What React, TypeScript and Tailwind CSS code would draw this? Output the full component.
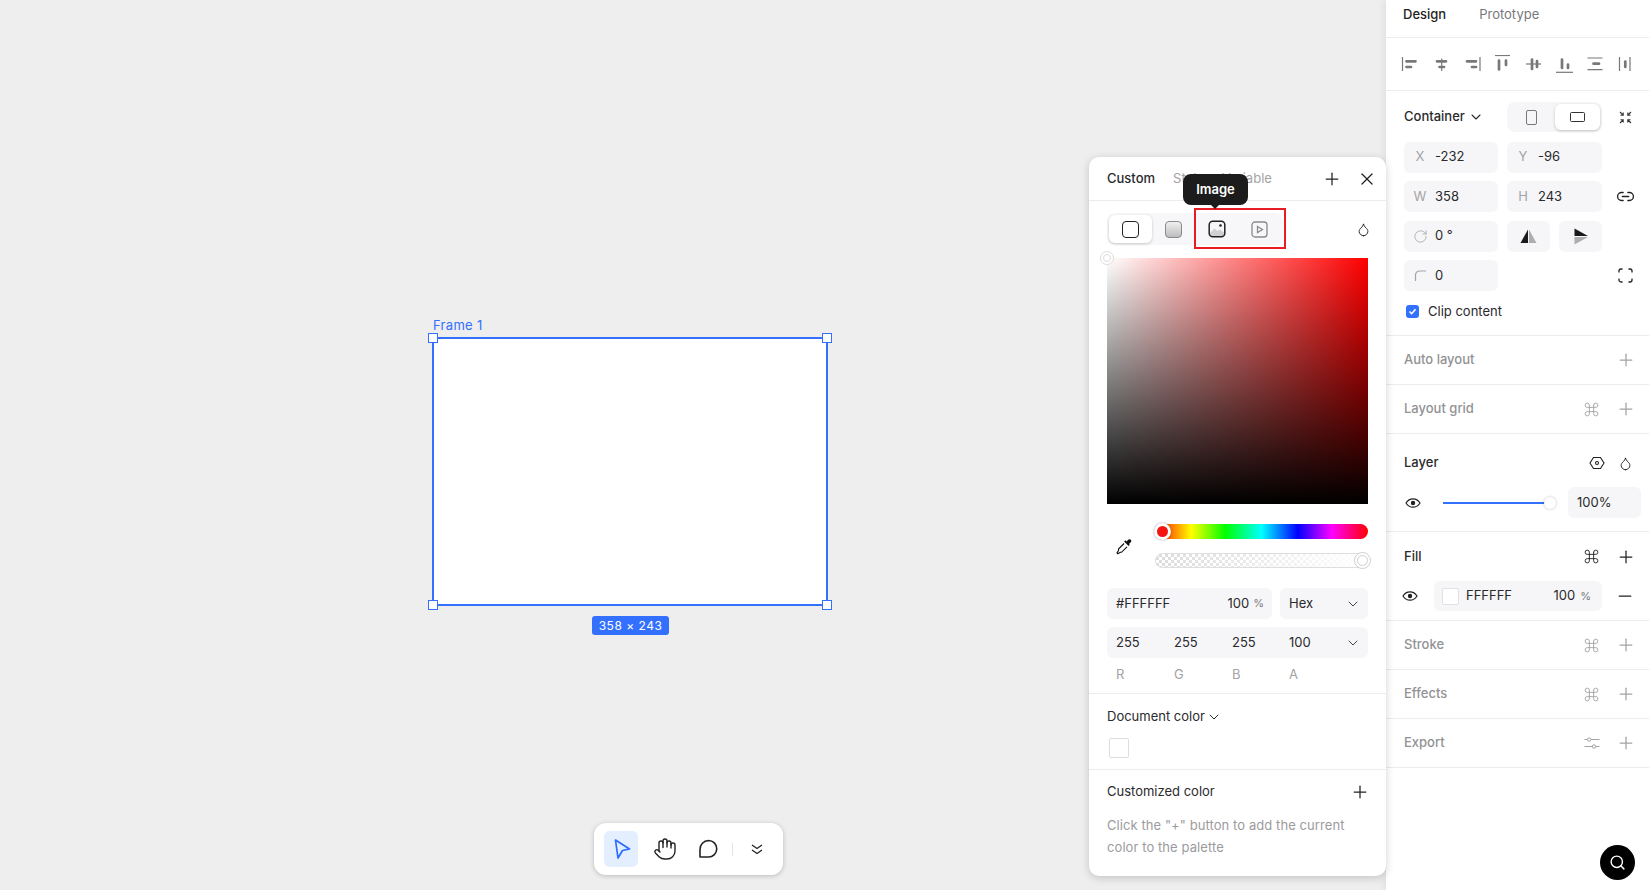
import { ChevronDown, Command, Droplet, Hand, Link2, Minus, Plus, RotateCw, Search, X } from 'lucide-react'
import type { ReactNode } from 'react'

function AlignIcon({ line, bars }: { line: string; bars: string }) {
  return (
    <svg width="20" height="18" viewBox="0 0 20 18" fill="none" className="shrink-0 text-[#77787b]">
      <path d={line} stroke="currentColor" strokeWidth="1.200" />
      <path d={bars} stroke="currentColor" strokeWidth="2.700" strokeLinecap="round" />
    </svg>
  )
}

const alignIcons = [
  { line: 'M2.500 2v14', bars: 'M6.500 6.300h9M6.500 12h4.500' },
  { line: 'M10.700 3.500V16', bars: 'M6 6.300h9M8.500 12H13' },
  { line: 'M18 2v14', bars: 'M5 6.300h9M10 12h4' },
  { line: 'M2 0.500h15', bars: 'M6 5.500v9M13 5.500V10' },
  { line: 'M2 9h15', bars: 'M8 4.500V14M13 6v6' },
  { line: 'M1 17.300h17', bars: 'M7 4.500V13M13 9.500V13' },
  { line: 'M1.500 3h15M1.500 14.700h15', bars: 'M7.500 8.700H13' },
  { line: 'M2.500 2v14M13 2v14', bars: 'M8.300 6.500V12' },
]

function Eye() {
  return (
    <svg width="16" height="16" viewBox="0 0 16 16" fill="none" className="text-[#222]">
      <path d="M1 8c1.700-2.800 4-4.200 7-4.200S13.300 5.200 15 8c-1.700 2.800-4 4.200-7 4.200S2.700 10.800 1 8Z" stroke="currentColor" strokeWidth="1.200" />
      <circle cx="8" cy="8" r="2.200" fill="currentColor" />
    </svg>
  )
}

function Field({ label, value }: { label: ReactNode; value: string }) {
  return (
    <div className="flex h-[31px] items-center rounded-md bg-[#f6f6f8]">
      <span className="flex w-[31px] justify-center pl-[1px] text-[13px] text-[#a3a3a5]">{label}</span>
      <span className="text-[13px] text-[#2a2a2c]">{value}</span>
    </div>
  )
}

function EmptySection({ title, extra }: { title: string; extra?: ReactNode }) {
  return (
    <div className="flex h-[49px] items-center justify-between border-b border-[#ececee] pl-[18px] pr-[13px]">
      <span className="text-[13px] font-medium text-[#929294]">{title}</span>
      <div className="flex items-center gap-[16px] text-[#a3a3a5]">
        {extra}
        <Plus size={20} strokeWidth={1.500} />
      </div>
    </div>
  )
}

function Sidebar() {
  return (
    <aside className="relative z-10 flex h-full w-[263px] shrink-0 flex-col bg-white shadow-[-3px_0_6px_rgba(0,0,0,0.05)]">
      <div className="flex h-[38px] items-center gap-[33px] border-b border-[#ececee] pb-[7px] pl-[17px] text-[13px]">
        <span className="font-[450] text-[#1f1f21]">Design</span>
        <span className="text-[#77787b]">Prototype</span>
      </div>

      <div className="flex h-[53px] items-center gap-[11px] border-b border-[#ececee] pl-[14px]">
        {alignIcons.map((icon) => (
          <AlignIcon key={icon.line + icon.bars} line={icon.line} bars={icon.bars} />
        ))}
      </div>

      <div className="h-[245px] border-b border-[#ececee] pl-[18px] pt-[11px]">
        <div className="grid grid-cols-[94px_95px_38px] grid-rows-[31px_31px_31px_31px_31px] gap-x-[9px] gap-y-[8.5px]">
          <div className="flex h-[30px] items-center gap-[3px] text-[13px] font-[450] text-[#2a2a2c]">
            Container
            <ChevronDown size={16} strokeWidth={1.600} />
          </div>
          <div className="flex h-[30px] items-center rounded-lg bg-[#f6f6f8] px-[2px]">
            <div className="flex w-[46px] justify-center">
              <div className="h-[15px] w-[11px] rounded-[2px] border border-[#77787b]" />
            </div>
            <div className="flex h-[26px] w-[46px] items-center justify-center rounded-md bg-white shadow-[0_1px_3px_rgba(0,0,0,0.22)]">
              <div className="h-[10px] w-[15px] rounded-[1.500px] border border-[#333]" />
            </div>
          </div>
          <div className="flex h-[30px] items-center pl-[7px] text-[#333]">
            <svg width="15" height="15" viewBox="0 0 15 15" fill="none" stroke="currentColor" strokeWidth="1.100">
              <path d="M2 2 5 5M5.200 2.500v2.700H2.500M13 2 10 5M9.800 2.500v2.700h2.700M2 13l3-3M5.200 12.500V9.800H2.500M13 13l-3-3M9.800 12.500V9.800h2.700" />
            </svg>
          </div>

          <Field label="X" value="-232" />
          <Field label="Y" value="-96" />
          <div />

          <Field label="W" value="358" />
          <Field label="H" value="243" />
          <div className="flex items-center pl-[5px] text-[#222]">
            <Link2 size={19} strokeWidth={1.700} />
          </div>

          <Field label={<RotateCw size={15} strokeWidth={1.300} />} value="0 °" />
          <div className="flex gap-[9px]">
            <div className="flex h-[31px] w-[43px] items-center justify-center rounded-md bg-[#f6f6f8]">
              <svg width="17" height="14" viewBox="0 0 17 14">
                <path d="M8 0.500V14H0.500Z" fill="#1a1a1a" />
                <path d="M9 0.500V14H16.500Z" fill="#aeaeb0" />
              </svg>
            </div>
            <div className="flex h-[31px] w-[43px] items-center justify-center rounded-md bg-[#f6f6f8]">
              <svg width="14" height="17" viewBox="0 0 14 17">
                <path d="M0.500 0.500 14 8H0.500Z" fill="#1a1a1a" />
                <path d="M0.500 9H14L0.500 16.500Z" fill="#aeaeb0" />
              </svg>
            </div>
          </div>
          <div />

          <Field
            label={
              <svg width="13" height="13" viewBox="0 0 13 13" fill="none" stroke="currentColor" strokeWidth="1.200">
                <path d="M1.500 12V6a4 4 0 0 1 4-4H12" />
              </svg>
            }
            value="0"
          />
          <div />
          <div className="flex items-center pl-[7px] text-[#222]">
            <svg width="15" height="15" viewBox="0 0 15 15" fill="none" stroke="currentColor" strokeWidth="1.300">
              <path d="M1 4.500V3a2 2 0 0 1 2-2h1.500M10.500 1H12a2 2 0 0 1 2 2v1.500M14 10.500V12a2 2 0 0 1-2 2h-1.500M4.500 14H3a2 2 0 0 1-2-2v-1.500" />
            </svg>
          </div>
        </div>
        <label className="mt-[11px] flex items-center gap-[9px] pl-[2px] text-[13px] text-[#2a2a2c]">
          <span className="flex h-[13px] w-[13px] items-center justify-center rounded-[3px] bg-[#3370ff]">
            <svg width="9" height="9" viewBox="0 0 9 9" fill="none" stroke="#fff" strokeWidth="1.600">
              <path d="M1.500 4.500 3.700 6.700 7.500 2.300" />
            </svg>
          </span>
          Clip content
        </label>
      </div>

      <EmptySection title="Auto layout" />
      <EmptySection title="Layout grid" extra={<Command size={17} strokeWidth={1.300} />} />

      <div className="h-[98px] border-b border-[#ececee] pl-[18px] pr-[16px]">
        <div className="flex h-[58px] items-center justify-between">
          <span className="text-[13px] font-[450] text-[#2a2a2c]">Layer</span>
          <div className="flex items-center gap-[13px] text-[#222]">
            <svg width="16" height="16" viewBox="0 0 16 16" fill="none" stroke="currentColor" strokeWidth="1.100">
              <path d="M4.500 2.500h7L15 8l-3.500 5.500h-7L1 8Z" />
              <circle cx="8" cy="8" r="1.500" />
            </svg>
            <Droplet size={15} strokeWidth={1.500} />
          </div>
        </div>
        <div className="-mr-[16px] -mt-[5px] flex items-center">
          <span className="ml-[1px] shrink-0">
            <Eye />
          </span>
          <div className="relative ml-[22px] h-[2px] w-[107px] shrink-0 bg-[#3370ff]">
            <span className="absolute -right-[6px] -top-[5px] h-[12px] w-[12px] rounded-full bg-white shadow-[0_0_3px_rgba(0,0,0,0.25)]" />
          </div>
          <div className="ml-[18px] flex h-[31px] w-[73px] shrink-0 items-center rounded-md bg-[#f6f6f8] pl-[9px] text-[13px] text-[#2a2a2c]">100%</div>
        </div>
      </div>

      <div className="h-[89px] border-b border-[#ececee] pl-[18px] pr-[13px]">
        <div className="flex h-[49px] items-center justify-between">
          <span className="text-[13px] font-[450] text-[#2a2a2c]">Fill</span>
          <div className="flex items-center gap-[16px] text-[#222]">
            <Command size={17} strokeWidth={1.300} />
            <Plus size={20} strokeWidth={1.500} />
          </div>
        </div>
        <div className="flex items-center">
          <span className="-ml-[2px]">
            <Eye />
          </span>
          <div className="ml-[16px] flex h-[30px] w-[168px] items-center rounded-md bg-[#f6f6f8] pl-[8px] pr-[11px] text-[13px] text-[#2a2a2c]">
            <span className="h-[17px] w-[17px] rounded-[2px] border border-[#e2e2e4] bg-white" />
            <span className="ml-[7px]">FFFFFF</span>
            <span className="ml-auto">100</span>
            <span className="ml-[5px] text-[11px] text-[#77787b]">%</span>
          </div>
          <Minus size={20} strokeWidth={1.500} className="ml-[13px] text-[#222]" />
        </div>
      </div>

      <EmptySection title="Stroke" extra={<Command size={17} strokeWidth={1.300} />} />
      <EmptySection title="Effects" extra={<Command size={17} strokeWidth={1.300} />} />
      <EmptySection
        title="Export"
        extra={
          <svg width="16" height="14" viewBox="0 0 16 14" fill="none" stroke="currentColor" strokeWidth="1">
            <path d="M0.500 3.500h3M7 3.500h8.500M0.500 10.500h8M11.500 10.500h4" />
            <circle cx="5.200" cy="3.500" r="1.700" />
            <circle cx="10" cy="10.500" r="1.700" />
          </svg>
        }
      />

      <div className="flex flex-1 justify-end pr-[14px] pt-[77px]">
        <div className="flex h-[35px] w-[35px] items-center justify-center rounded-full bg-black text-white">
          <Search size={17} strokeWidth={2} />
        </div>
      </div>
    </aside>
  )
}

function ColorPopup() {
  return (
    <div className="absolute left-[1089px] top-[157px] z-20 h-[719px] w-[297px] rounded-[10px] bg-white shadow-[0_2px_8px_rgba(0,0,0,0.18)]">
      <div className="flex h-[44px] items-center border-b border-[#ececee] px-[18px] text-[13px]">
        <span className="font-[450] text-[#2a2a2c]">Custom</span>
        <span className="ml-[18px] text-[#a3a3a5]">Style</span>
        <span className="ml-[18px] text-[#a3a3a5]">Variable</span>
        <Plus size={20} strokeWidth={1.500} className="ml-auto mr-[15px] text-[#222]" />
        <X size={20} strokeWidth={1.500} className="-mr-[9px] text-[#222]" />
      </div>

      <div className="relative px-[18px] pt-[12px]">
        <div className="flex items-center justify-between">
          <div className="flex h-[32px] w-[176px] items-center rounded-lg bg-[#f7f7f9] px-[2px]">
            <div className="flex h-[28px] w-[43px] items-center justify-center rounded-md bg-white shadow-[0_1px_3px_rgba(0,0,0,0.2)]">
              <div className="h-[17px] w-[17px] rounded-[4px] border-[1.500px] border-[#222]" />
            </div>
            <div className="flex w-[43px] justify-center">
              <div className="h-[17px] w-[17px] rounded-[4px] border-[1.500px] border-[#8a8a8c] bg-gradient-to-b from-[#f0f0f0] to-[#bdbdbd]" />
            </div>
            <div className="flex w-[43px] justify-center">
              <svg width="18" height="18" viewBox="0 0 18 18" fill="none">
                <path d="M2 13 6.500 8.500 9.500 11 12 9.500 16 12.500V14.500L14 16H4L2 14.500Z" fill="#d0d0d2" />
                <rect x="1.200" y="1.200" width="15.600" height="15.600" rx="3.500" stroke="#222" strokeWidth="1.500" />
                <circle cx="12.500" cy="5.500" r="1.300" fill="#222" />
              </svg>
            </div>
            <div className="flex w-[43px] justify-center">
              <svg width="17" height="17" viewBox="0 0 17 17" fill="none" stroke="#8a8a8c" strokeWidth="1.300">
                <rect x="1" y="1" width="15" height="15" rx="3" />
                <path d="M6.500 5.500 11.500 8.500 6.500 11.500Z" />
              </svg>
            </div>
          </div>
          <Droplet size={15} strokeWidth={1.500} className="-mr-[3px] text-[#222]" />
        </div>

        {/* highlight the reference draws around the fill types */}
        <div className="absolute left-[105px] top-[7px] h-[41px] w-[92px] border-2 border-[#e81c24]" />
        <div className="absolute left-[94px] -top-[27px] flex h-[31px] w-[65px] items-center justify-center rounded-lg bg-[#1c1c1c] pt-[1px] text-[13px] font-semibold text-white">
          Image
          <span className="absolute -bottom-[4px] left-[28px] border-x-[4px] border-t-[4px] border-x-transparent border-t-[#1c1c1c]" />
        </div>

        <div className="relative mt-[13px] h-[246px] w-[261px] bg-[linear-gradient(to_top,#000,transparent),linear-gradient(to_right,#fff,#f00)]">
          <span className="absolute -left-[7px] -top-[7px] flex h-[14px] w-[14px] items-center justify-center rounded-full border border-[#ddd] bg-white">
            <span className="h-[8px] w-[8px] rounded-full border border-[#ddd]" />
          </span>
        </div>

        <div className="mt-[20px] flex">
          <div className="flex w-[48px] items-center pl-[9px]">
            <svg width="18" height="18" viewBox="0 0 18 18" fill="none">
              <path d="M8 6.500 2.500 12v1.500L1 16l.8.800 2.500-1.500h1.200L11 9.800" stroke="#111" strokeWidth="1.100" fill="#fff" />
              <path d="M10.500 4.500l2-2a1.800 1.800 0 0 1 2.500 2.500l-2 2 .8.800-1.200 1.200-4.500-4.500 1.200-1.200Z" fill="#111" />
            </svg>
          </div>
          <div className="flex flex-1 flex-col gap-[14px]">
            <div className="relative h-[15px] rounded-full bg-[linear-gradient(to_right,#f00_0%,#ff0_17%,#0f0_33%,#0ff_50%,#00f_67%,#f0f_83%,#f00_100%)]">
              <span className="absolute -left-[1px] -top-[1px] h-[17px] w-[17px] rounded-full border-[3px] border-white bg-[#f5140f] shadow-[0_0_2px_rgba(0,0,0,0.45)]" />
            </div>
            <div className="relative h-[15px] rounded-full border border-[#dedee0] bg-[linear-gradient(to_right,transparent,#fff),repeating-conic-gradient(#dcdcdc_0_25%,#fff_0_50%)] bg-[length:100%_100%,6px_6px]">
              <span className="absolute -right-[4px] -top-[2px] flex h-[17px] w-[17px] items-center justify-center rounded-full border border-[#cfcfd1] bg-white">
                <span className="h-[11px] w-[11px] rounded-full border border-[#cfcfd1]" />
              </span>
            </div>
          </div>
        </div>

        <div className="mt-[20px] flex gap-[8px]">
          <div className="flex h-[31px] w-[165px] items-center rounded-md bg-[#f6f6f8] pl-[9px] pr-[8px] text-[13px] text-[#2a2a2c]">
            #FFFFFF
            <span className="ml-auto">100</span>
            <span className="ml-[4px] text-[11px] text-[#77787b]">%</span>
          </div>
          <div className="flex h-[31px] flex-1 items-center justify-between rounded-md bg-[#f6f6f8] pl-[9px] pr-[7px] text-[13px] text-[#2a2a2c]">
            Hex
            <ChevronDown size={16} strokeWidth={1.500} className="text-[#444]" />
          </div>
        </div>
        <div className="mt-[8px] flex h-[31px] items-center rounded-md bg-[#f6f6f8] pl-[9px] pr-[7px] text-[13px] text-[#2a2a2c]">
          <span className="w-[58px]">255</span>
          <span className="w-[58px]">255</span>
          <span className="w-[57px]">255</span>
          <span>100</span>
          <ChevronDown size={16} strokeWidth={1.500} className="ml-auto text-[#444]" />
        </div>
        <div className="flex h-[35px] items-center pb-[2px] pl-[9px] text-[13px] text-[#a3a3a5]">
          <span className="w-[58px]">R</span>
          <span className="w-[58px]">G</span>
          <span className="w-[57px]">B</span>
          <span>A</span>
        </div>
      </div>

      <div className="h-[77px] border-y border-[#ececee] px-[18px]">
        <div className="flex h-[45px] items-center gap-[1px] text-[13px] text-[#2a2a2c]">
          Document color
          <ChevronDown size={16} strokeWidth={1.500} />
        </div>
        <div className="ml-[2px] mt-[-1px] h-[20px] w-[20px] rounded-[2px] border border-[#dedee0] bg-white" />
      </div>

      <div className="px-[18px]">
        <div className="-mr-[2px] flex h-[44px] items-center justify-between text-[13px] text-[#2a2a2c]">
          Customized color
          <Plus size={20} strokeWidth={1.500} className="text-[#222]" />
        </div>
        <p className="w-[250px] text-[13px] leading-[22px] tracking-[0.08px] text-[#9b9b9d]">
          Click the "+" button to add the current color to the palette
        </p>
      </div>
    </div>
  )
}

function Toolbar() {
  return (
    <div className="absolute left-[594px] top-[823px] flex h-[52px] w-[189px] items-center rounded-[12px] bg-white pl-[10px] text-[#222] shadow-[0_1px_5px_rgba(0,0,0,0.22)]">
      <div className="flex h-[36px] w-[34px] items-center justify-center rounded-md bg-[#e3eefe] pl-[2px]">
        <svg width="20" height="20" viewBox="0 0 20 20" fill="none" stroke="#2c6bff" strokeWidth="1.700" strokeLinejoin="round">
          <path d="M3.500 1 17.500 10 10.500 11.500 6 19Z" />
        </svg>
      </div>
      <Hand size={24} strokeWidth={1.400} className="ml-[15px]" />
      <svg width="20" height="20" viewBox="0 0 20 20" fill="none" stroke="currentColor" strokeWidth="1.600" className="ml-[21px]">
        <path d="M10.500 1.500a8.200 8.200 0 0 1 0 16.500H2v-7.500A8.800 8.800 0 0 1 10.500 1.500Z" strokeLinejoin="round" />
      </svg>
      <div className="ml-[14px] h-[13px] w-[1px] bg-[#e4e4e6]" />
      <svg width="14" height="14" viewBox="0 0 14 14" fill="none" stroke="currentColor" strokeWidth="1.300" className="ml-[17px]">
        <path d="M2 3l5 3.500L12 3M2 8l5 3.500L12 8" />
      </svg>
    </div>
  )
}

function Handle({ className }: { className: string }) {
  return <span className={`absolute h-[10px] w-[10px] border border-[#3370ff] bg-white ${className}`} />
}

export default function App() {
  return (
    <div className="flex h-[890px] w-full overflow-hidden bg-[#eeeeee] font-['Inter',sans-serif]">
      <main className="relative flex-1">
        <span className="absolute left-[433px] top-[316px] text-[13px] tracking-[0.3px] text-[#3370ff]">Frame 1</span>
        <div className="absolute left-[432px] top-[337px] h-[269px] w-[396px] border-2 border-[#3370ff] bg-white">
          <Handle className="-left-[6px] -top-[6px]" />
          <Handle className="-right-[6px] -top-[6px]" />
          <Handle className="-bottom-[6px] -left-[6px]" />
          <Handle className="-bottom-[6px] -right-[6px]" />
        </div>
        <div className="absolute left-[592px] top-[616px] flex h-[19px] w-[77px] items-center justify-center rounded-[3px] bg-[#3370ff] text-[12px] tracking-[0.5px] text-white">
          358 × 243
        </div>
        <Toolbar />
        <ColorPopup />
      </main>
      <Sidebar />
    </div>
  )
}
